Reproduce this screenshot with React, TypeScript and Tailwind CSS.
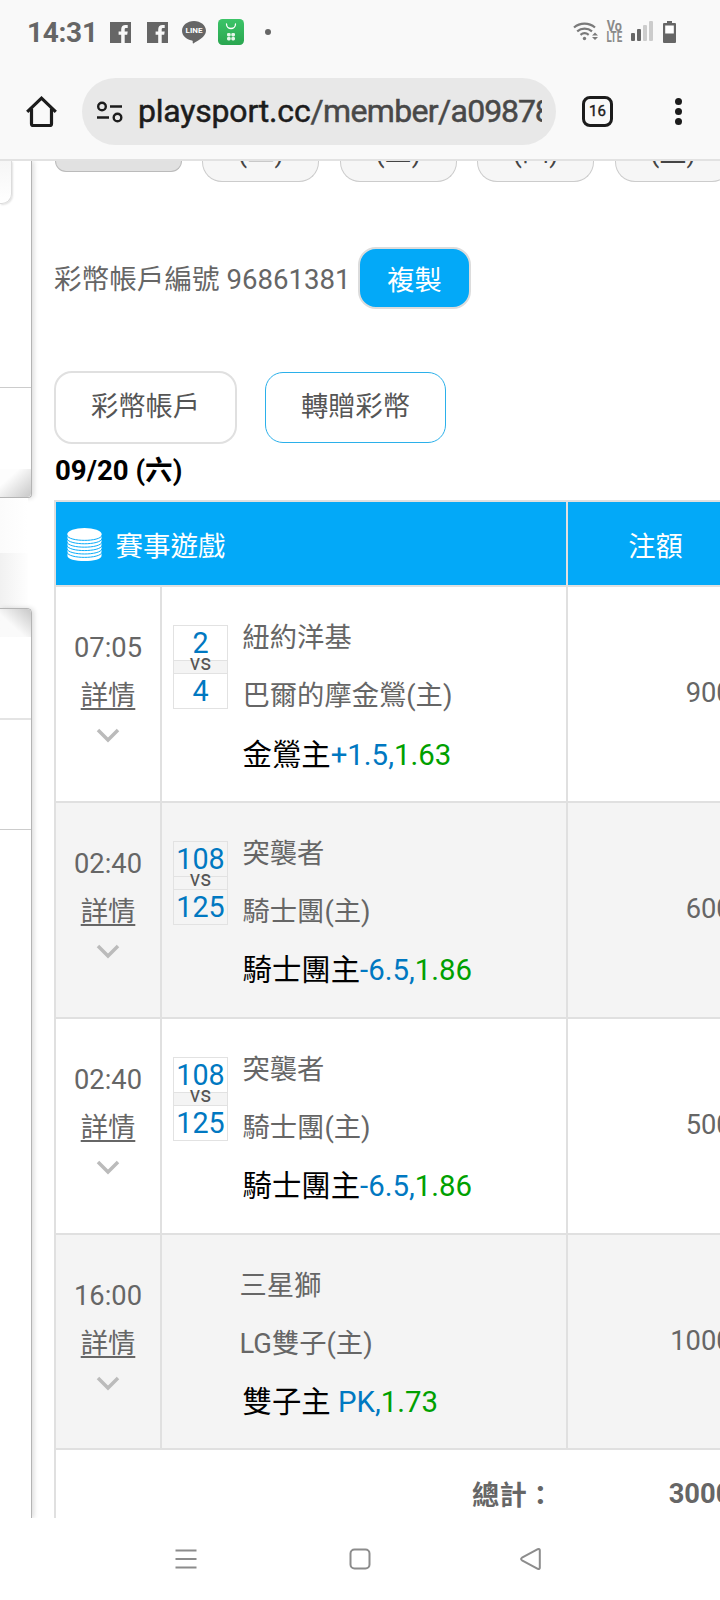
import { ReactNode } from 'react';
import clsx from 'clsx';

interface Bet {
  time: string;
  scores?: [string, string];
  away: string;
  home: string;
  pick: string;
  line: string;
  odds: string;
  amount: string;
}

const bets: Bet[] = [
  { time: '07:05', scores: ['2', '4'], away: '紐約洋基', home: '巴爾的摩金鶯(主)', pick: '金鶯主', line: '+1.5,', odds: '1.63', amount: '9000' },
  { time: '02:40', scores: ['108', '125'], away: '突襲者', home: '騎士團(主)', pick: '騎士團主', line: '-6.5,', odds: '1.86', amount: '6000' },
  { time: '02:40', scores: ['108', '125'], away: '突襲者', home: '騎士團(主)', pick: '騎士團主', line: '-6.5,', odds: '1.86', amount: '5000' },
  { time: '16:00', away: '三星獅', home: 'LG雙子(主)', pick: '雙子主', line: ' PK,', odds: '1.73', amount: '10000' },
];

const weekdays = ['(二)', '(三)', '(四)', '(五)'];

function FacebookIcon({ className }: { className?: string }) {
  return (
    <svg viewBox="0 0 21 21" className={clsx('w-[21px] h-[21px] shrink-0 mt-[1px]', className)}>
      <rect width="21" height="21" fill="#666" />
      <path d="M11.2 21v-8.2H8.6V9.4h2.6V7.2c0-2.8 1.7-4.3 4.2-4.3h2.3v3.2h-1.5c-1.2 0-1.5.6-1.5 1.4v1.9h3l-.5 3.4h-2.5V21z" fill="#f9f9f9" />
    </svg>
  );
}

function StatusBar() {
  return (
    <div className="flex items-center h-[64px] pl-[27px] text-[#666]">
      <span className="w-[83px] text-[28px] leading-[64px] font-bold pt-[2px] tracking-[-0.3px] whitespace-nowrap">14:31</span>
      <FacebookIcon />
      <FacebookIcon className="ml-4" />
      <div className="relative ml-[14px] w-6 h-6 shrink-0">
        <svg viewBox="0 0 24 24" className="w-6 h-6">
          <path d="M12 1C5.4 1 0 5.4 0 10.8c0 4.8 4.3 8.9 10 9.7.9.2.8.8.7 2.1-.1.8.3 1 1 .6C15 21.4 24 17 24 10.8 24 5.4 18.6 1 12 1z" fill="#666" />
        </svg>
        <span className="absolute inset-x-0 top-[7px] text-center text-[8px] leading-[8px] font-bold text-white">LINE</span>
      </div>
      <svg viewBox="0 0 26 26" className="ml-3 w-[26px] h-[26px] shrink-0">
        <defs>
          <linearGradient id="bag" x1="0" y1="0" x2="0" y2="1">
            <stop offset="0" stopColor="#3cc468" />
            <stop offset="1" stopColor="#2aa650" />
          </linearGradient>
        </defs>
        <rect width="26" height="26" rx="4.5" fill="url(#bag)" />
        <path d="M8.5 5a4.5 4.5 0 0 0 9 0" fill="none" stroke="#fff" strokeWidth="1.3" strokeLinecap="round" />
        <g fill="#e6f6ea">
          <rect x="9" y="14" width="3.7" height="3.4" rx="1.3" />
          <rect x="13.3" y="14" width="3.7" height="3.4" rx="1.3" />
          <rect x="9" y="18" width="3.7" height="3.4" rx="1.3" />
          <rect x="13.3" y="18" width="3.7" height="3.4" rx="1.3" />
        </g>
      </svg>
      <span className="ml-[21px] w-[6px] h-[6px] rounded-full bg-[#666]" />

      <svg viewBox="0 0 25 20" className="ml-[302px] w-[25px] h-5 shrink-0 -mt-[2px]" fill="none" stroke="#7a7a7a" strokeWidth="2.2">
        <path d="M1 6.5a16 16 0 0 1 21 0" />
        <path d="M4.2 10.3a11.3 11.3 0 0 1 14.8 0" />
        <path d="M7.5 13.8a6.5 6.5 0 0 1 8.2 0" />
        <circle cx="11.5" cy="17.5" r="1.7" fill="#7a7a7a" stroke="none" />
        <path d="M22 11.5l3 3h-6zM22 19l3-3h-6z" fill="#7a7a7a" stroke="none" />
      </svg>
      <div className="flex flex-col items-center ml-[8px] w-[17px] text-[14px] leading-[11px] font-bold text-[#8a8a8a]">
        <div className="scale-x-90">Vo</div>
        <div className="scale-x-70">LTE</div>
      </div>
      <svg viewBox="0 0 22 20" className="ml-2 w-[22px] h-5 shrink-0 -mt-[2px]">
        <rect x="0" y="12" width="4" height="8" rx="1" fill="#666" />
        <rect x="6" y="8" width="4" height="12" rx="1" fill="#666" />
        <rect x="12" y="4" width="4" height="16" rx="1" fill="#ccc" />
        <rect x="18" y="0" width="4" height="20" rx="1" fill="#ccc" />
      </svg>
      <svg viewBox="0 0 13 22" className="ml-[10px] w-[13px] h-[22px] shrink-0">
        <path d="M4 0h5v2h3a1 1 0 0 1 1 1v18a1 1 0 0 1-1 1H1a1 1 0 0 1-1-1V3a1 1 0 0 1 1-1h3z" fill="#666" />
        <rect x="2.2" y="4.5" width="8.6" height="8" fill="#fff" />
      </svg>
    </div>
  );
}

function AddressBar() {
  return (
    <div className="flex items-center h-[95px] pb-[1px]">
      <svg viewBox="0 0 32 32" className="ml-[26px] mb-[-2px] mr-6 w-8 h-8 shrink-0" fill="none" stroke="#1c1c1c" strokeWidth="3.2">
        <path d="M1.2 15.8L15.5 2.2l14.3 13.6" />
        <path d="M5.5 12.5v15.2q0 1.8 1.8 1.8h16.4q1.8 0 1.8-1.8V12.5" />
      </svg>
      <div className="flex items-center w-[474px] h-[67px] rounded-full bg-[#e8e8e8] pl-[15px] mt-[1px]">
        <svg viewBox="0 0 26 22" className="w-[26px] h-[22px] shrink-0" fill="none" stroke="#1c1c1c" strokeWidth="2.4">
          <circle cx="5" cy="5.5" r="3.8" />
          <path d="M13 5.5h12M0 16.5h12" />
          <circle cx="20.5" cy="16.5" r="3.8" />
        </svg>
        <div className="ml-[15px] w-[404px] overflow-hidden whitespace-nowrap text-[32px] leading-[48px] pb-[2px] text-[#1c1c1c] tracking-[-0.2px] [-webkit-text-stroke:0.5px]">
          playsport.cc
          <span className="text-[#484848] tracking-[-0.65px]">
            /member/a<span className="tracking-[-1.1px]">09878</span>
          </span>
        </div>
      </div>
      <div className="flex items-center justify-center ml-[26px] mt-[1px] w-[31px] h-[31px] rounded-[8px] border-[3px] border-[#1c1c1c] text-[15px] leading-none text-[#1c1c1c] [-webkit-text-stroke:0.4px]">
        16
      </div>
      <div className="flex flex-col gap-[3px] ml-[62px]">
        <span className="w-[7px] h-[7px] rounded-full bg-[#1c1c1c]" />
        <span className="w-[7px] h-[7px] rounded-full bg-[#1c1c1c]" />
        <span className="w-[7px] h-[7px] rounded-full bg-[#1c1c1c]" />
      </div>
    </div>
  );
}

// neighbouring page panels peeking in from the left edge
function SidePanels() {
  return (
    <div className="w-[54px] shrink-0 flex flex-col overflow-hidden">
      <div className="flex flex-col w-8 h-[337px] shrink-0 rounded-br-[4px] border-r border-b border-[#b4b4b4] bg-white shadow-[2px_0_5px_rgba(0,0,0,0.14)]">
        <div className="w-3 h-[43px] rounded-br-[10px] border-r border-b border-[#dcdcdc] bg-linear-to-b from-[#f6f6f6] to-white shadow-[1px_1px_2px_rgba(0,0,0,0.12)]" />
        <div className="h-[184px] border-b border-[#ccc]" />
        <div className="h-[81px]" />
        <div className="flex-1 rounded-br-[4px] bg-linear-to-br from-[#fdfdfd] from-30% to-[#c8c8c8]" />
      </div>
      <div className="w-7 h-[55px] shrink-0 bg-linear-to-r from-[#fbfbfb] to-white" />
      <div className="w-7 h-[55px] shrink-0 bg-linear-to-r from-[#f1f1f1] to-[#fefefe]" />
      <div className="flex flex-col w-8 flex-1 rounded-tr-[5px] border-r border-t border-[#b4b4b4] bg-white shadow-[2px_0_5px_rgba(0,0,0,0.14)]">
        <div className="h-7 rounded-tr-[4px] bg-linear-to-tr from-[#fafafa] from-40% to-[#c8c8c8]" />
        <div className="h-[83px] border-b-2 border-[#e4e4e4]" />
        <div className="h-[110px] border-b border-[#ccc]" />
      </div>
    </div>
  );
}

function CoinsIcon() {
  return (
    <svg viewBox="0 0 36 35" className="w-[35px] h-[35px] shrink-0 mt-[1px]">
      <path d="M.5 6.5v22.7c0 3.2 8 5.3 17.5 5.3s17.5-2.1 17.5-5.3V6.5z" fill="#fff" />
      <ellipse cx="18" cy="6.5" rx="17.5" ry="6" fill="#fff" />
      <g fill="none" stroke="#03a9f8" strokeWidth="1">
        <path d="M0 8c1.5 7 34.5 7 36 0" />
        <path d="M0 11.5c1.5 7 34.5 7 36 0" />
        <path d="M0 15c1.5 7 34.5 7 36 0" />
        <path d="M0 18.5c1.5 7 34.5 7 36 0" />
        <path d="M0 22c1.5 7 34.5 7 36 0" />
        <path d="M0 25.5c1.5 7 34.5 7 36 0" />
      </g>
    </svg>
  );
}

function Score({ children }: { children: ReactNode }) {
  return (
    <div className="flex justify-center h-9 border border-[#e2e2e2] text-[28.7px] leading-[34px] text-[#0078c1]">
      {children}
    </div>
  );
}

function BetRow({ bet, striped }: { bet: Bet; striped: boolean }) {
  return (
    <div className={clsx('flex h-[215.85px] shrink-0 border-b-2 border-[#e0e0e0]', striped && 'bg-[#f4f4f4]')}>
      <div className="flex flex-col items-center w-[106px] shrink-0 pt-[37px] border-r-2 border-[#e0e0e0] leading-[48px]">
        <span>{bet.time}</span>
        <a className="underline underline-offset-[3px] decoration-2">詳情</a>
        <svg viewBox="0 0 24 15" className="mt-2 w-6 h-[15px]" fill="none" stroke="#bbb" strokeWidth="3.5">
          <path d="M2 2l10 10L22 2" />
        </svg>
      </div>
      <div className="flex w-[406px] shrink-0 border-r-2 border-[#e0e0e0]">
        <div className="w-[66px] shrink-0 pt-[38px] pl-[11px]">
          {bet.scores && (
            <div className="w-[55px]">
              <Score>{bet.scores[0]}</Score>
              <div className="flex justify-center h-3 border-x border-[#e2e2e2] bg-[#f4f4f4] text-[21.5px] leading-[4px] text-[#555]">
                <span>vs</span>
              </div>
              <Score>{bet.scores[1]}</Score>
            </div>
          )}
        </div>
        <div className={clsx('pt-[22px] leading-[58px] whitespace-pre', bet.scores ? 'pl-[14.5px]' : 'pl-[11.5px]')}>
          <div>{bet.away}</div>
          <div>{bet.home}</div>
          <div className={clsx('text-[29.4px] pt-[0.5px] text-black', !bet.scores && 'pl-[3px]')}>
            {bet.pick}<span className="text-[#0078c1]">{bet.line}</span><span className="text-[#00a000]">{bet.odds}</span>
          </div>
        </div>
      </div>
      <div className="flex items-center justify-end w-[179px] shrink-0">{bet.amount}</div>
    </div>
  );
}

function Chip({ children }: { children: ReactNode }) {
  return (
    <div className="flex items-end justify-center w-[117px] h-[21px] shrink-0 rounded-b-[20px] border border-t-0 border-[#ccc] bg-[#f6f6f6] text-[#444]">
      <span className="leading-[56px]">{children}</span>
    </div>
  );
}

function MainContent() {
  return (
    <div className="flex flex-col flex-1 min-w-0 overflow-hidden">
      <div className="flex items-start gap-[20.4px] h-[86px] shrink-0 pl-[1px]">
        <div className="w-[127px] h-[11px] shrink-0 rounded-b-[18px] border border-t-0 border-[#bbb] bg-[#e1e1e1]" />
        {weekdays.map((day) => (
          <Chip key={day}>{day}</Chip>
        ))}
      </div>
      <div className="flex items-start h-[63px] shrink-0">
        <span className="whitespace-nowrap w-[304px] pt-[3px] leading-[60px] text-[27.6px]">彩幣帳戶編號 96861381</span>
        <button className="w-[113px] h-[62px] rounded-[18px] border-2 border-[#dcdcdc] bg-[#03a9f8] pt-[7px] text-white">複製</button>
      </div>
      <div className="flex items-center gap-7 h-[73px] shrink-0 mt-[61px]">
        <button className="w-[183px] h-[73px] rounded-[18px] border-2 border-[#e0e0e0] text-[#555]">彩幣帳戶</button>
        <button className="w-[181px] h-[71px] rounded-[18px] border border-[#2bb0ea] text-[#555]">轉贈彩幣</button>
      </div>
      <div className="h-[56px] shrink-0 pl-[1px] leading-[54px] text-[27.6px] font-bold text-black">09/20 (六)</div>

      <div className="flex flex-col flex-1 w-[693px] border-l-2 border-t-2 border-[#e0e0e0]">
        <div className="flex h-[85px] shrink-0 border-b-2 border-[#e0e0e0] bg-[#03a9f8] text-white">
          <div className="flex items-center w-[512px] shrink-0 pl-[11px] gap-[13.5px] border-r-2 border-[#e0e0e0]">
            <CoinsIcon />
            <span className="pt-[7px] text-[27.5px]">賽事遊戲</span>
          </div>
          <div className="flex items-center justify-center w-[175px] shrink-0 pt-[7px]">注額</div>
        </div>
        {bets.map((bet, i) => (
          <BetRow key={i} bet={bet} striped={i % 2 === 1} />
        ))}
        <div className="flex h-[67px] pt-[24px] leading-[40px] font-bold">
          <span className="w-[498px] pt-[2px] text-right">總計：</span>
          <span className="w-[193px] text-right">30000</span>
        </div>
      </div>
    </div>
  );
}

function NavBar() {
  return (
    <div className="flex items-center h-[82px] bg-white">
      <svg viewBox="0 0 22 22" className="ml-[175px] w-[22px] h-[22px]" stroke="#8c8c8c" strokeWidth="2">
        <path d="M.5 2.5h21M.5 11h21M.5 19.5h21" />
      </svg>
      <svg viewBox="0 0 22 22" className="ml-[152px] w-[22px] h-[22px]" fill="none" stroke="#8c8c8c" strokeWidth="2">
        <rect x="1.5" y="1.5" width="19" height="19" rx="4" />
      </svg>
      <svg viewBox="0 0 22 24" className="ml-[148px] w-[22px] h-6" fill="none" stroke="#8c8c8c" strokeWidth="2" strokeLinejoin="round">
        <path d="M18.8 2.2L3 10.7q-1.8 1.3 0 2.6l15.8 8.5q2 .6 2-1V3.2q0-1.6-2-1z" />
      </svg>
    </div>
  );
}

export default function App() {
  return (
    <div className="flex flex-col w-[720px] h-[1600px] overflow-hidden bg-white font-['Roboto','Noto_Sans_CJK_TC',sans-serif] text-[27.3px] text-[#666]">
      <header className="h-[161px] shrink-0 bg-[#f9f9f9] border-b-2 border-[#e2e2e2]">
        <StatusBar />
        <AddressBar />
      </header>
      <main className="flex h-[1357px] shrink-0 overflow-hidden">
        <SidePanels />
        <MainContent />
      </main>
      <NavBar />
    </div>
  );
}
